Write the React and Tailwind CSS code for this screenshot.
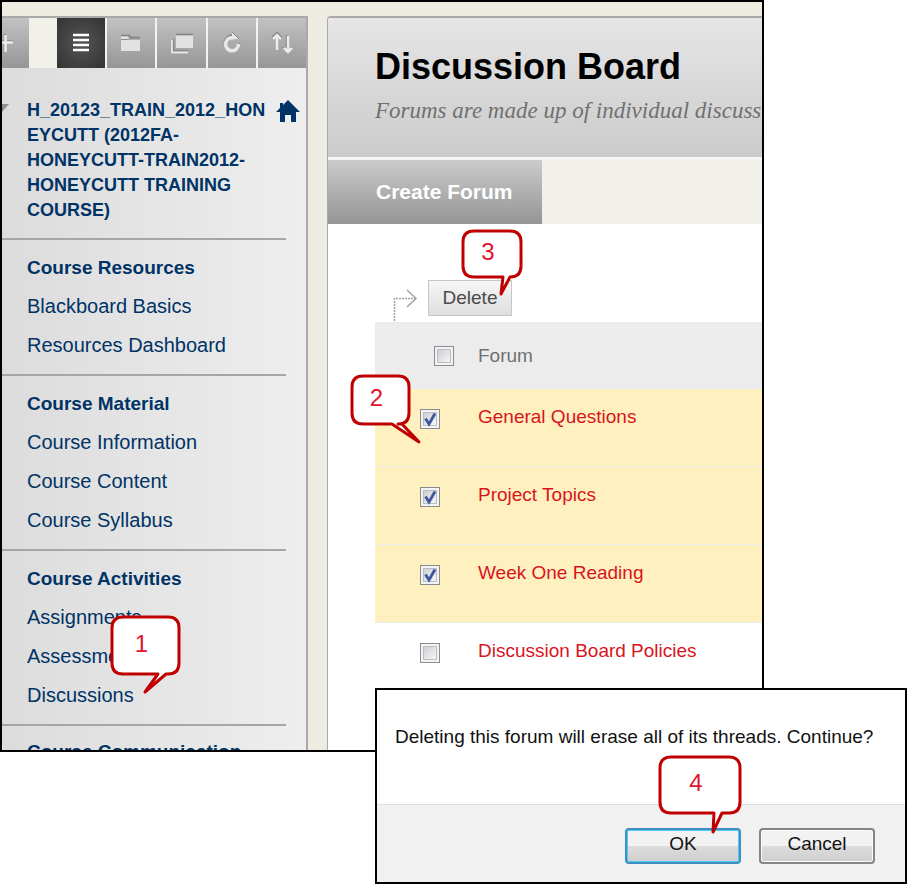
import { useState } from 'react';

const COURSE_SECTIONS = [
  { title: 'Course Resources', items: ['Blackboard Basics', 'Resources Dashboard'] },
  { title: 'Course Material', items: ['Course Information', 'Course Content', 'Course Syllabus'] },
  { title: 'Course Activities', items: ['Assignments', 'Assessments', 'Discussions'] },
];

const FORUMS = [
  { id: 'general', name: 'General Questions' },
  { id: 'topics', name: 'Project Topics' },
  { id: 'week-one', name: 'Week One Reading' },
  { id: 'policies', name: 'Discussion Board Policies' },
];

// Numbered speech bubble. `tail` is [left base x, right base x, tip x, tip y].
function Callout({ number, width: w, height: h, tail, className }) {
  const [baseLeft, baseRight, tipX, tipY] = tail;
  const r = 11;
  const d = `M${r} 0H${w - r}Q${w} 0 ${w} ${r}V${h - r}Q${w} ${h} ${w - r} ${h}H${baseRight}L${tipX} ${tipY}L${baseLeft} ${h}H${r}Q0 ${h} 0 ${h - r}V${r}Q0 0 ${r} 0Z`;

  return (
    <div className={`absolute z-10 pointer-events-none ${className}`} style={{ width: w, height: h }}>
      <svg width={w} height={h} className="absolute inset-0 overflow-visible" aria-hidden="true">
        <path d={d} fill="#fff" stroke="#c00000" strokeWidth="3" strokeLinejoin="round" />
      </svg>
      <span className="relative flex h-full items-center justify-center pr-2 pb-1 text-2xl font-normal text-[#e0142c]">
        {number}
      </span>
    </div>
  );
}

function ToolbarButton({ label, active, children }) {
  return (
    <button
      type="button"
      aria-label={label}
      className={`flex h-[50px] flex-1 items-center justify-center ${
        active
          ? 'bg-radial from-[#555] to-[#333]'
          : 'bg-linear-to-b from-[#c2c2c2] to-[#969696]'
      }`}
    >
      <svg width="24" height="24" viewBox="0 0 24 24" fill="none" aria-hidden="true">
        {children}
      </svg>
    </button>
  );
}

function CourseToolbar() {
  return (
    <div className="flex bg-[#f2f2f2]">
      <button
        type="button"
        aria-label="Add content"
        className="flex h-[50px] w-[27px] items-center bg-linear-to-b from-[#c2c2c2] to-[#969696]"
      >
        <svg width="12" height="20" viewBox="0 0 12 20" fill="none" aria-hidden="true">
          <path d="M3 1V18M0 8.500H11" stroke="#888" strokeWidth="2.500" />
          <path d="M3.500 2V19M0 9.500H11" stroke="#ececec" strokeWidth="2.500" />
        </svg>
      </button>
      <div className="w-7 bg-[#f1f1e9]" />
      <div className="flex flex-1 gap-0.5">
        <ToolbarButton label="List view" active>
          <path d="M4 4H20M4 9H20M4 14H20M4 19H20" stroke="#fff" strokeWidth="2.5" />
        </ToolbarButton>
        <ToolbarButton label="Folder view">
          <path d="M2 4.500H10L12 6.500H21" stroke="#808080" strokeWidth="1.500" />
          <path d="M2 5.500H9L11 9H21V20H2Z" fill="#e2e2e2" />
          <path d="M2 8.500H9L12 7H21" stroke="#8c8c8c" strokeWidth="1.200" />
        </ToolbarButton>
        <ToolbarButton label="Open in window">
          <path d="M6 3.500H23" stroke="#808080" strokeWidth="1.500" />
          <path d="M6 4.500H23V17H6Z" fill="#e2e2e2" />
          <path d="M2 9V21.500H18" stroke="#e4e4e4" strokeWidth="2" />
          <path d="M3.500 8V19.500H18" stroke="#858585" strokeWidth="1.200" />
        </ToolbarButton>
        <ToolbarButton label="Refresh">
          <path d="M15 5A7.500 7.500 0 1 0 19.500 12" stroke="#858585" strokeWidth="2" />
          <path d="M14 7A6.500 6.500 0 1 0 18.500 13" stroke="#e8e8e8" strokeWidth="3.500" />
          <path d="M12 1L19 8H12Z" fill="#e8e8e8" />
          <path d="M12 1L19 8" stroke="#858585" strokeWidth="1" />
        </ToolbarButton>
        <ToolbarButton label="Reorder">
          <path d="M2 7L7 2L12 7" stroke="#808080" strokeWidth="2" />
          <path d="M7 4V19M3 8L7 4L11 8" stroke="#ececec" strokeWidth="2.500" />
          <path d="M16.500 4V19M13 16L18 21L22 16" stroke="#808080" strokeWidth="1.500" />
          <path d="M18 5V20M14 17L18 21L22 17" stroke="#ececec" strokeWidth="2.500" />
        </ToolbarButton>
      </div>
    </div>
  );
}

function CourseMenu() {
  return (
    <nav
      aria-label="Course menu"
      className="w-[306px] shrink-0 border-t-2 border-r-2 border-[#a9a9a9] bg-linear-to-r from-[#dcdcdc] to-[#eee] text-[#003366]"
    >
      <CourseToolbar />

      <div className="mr-5">
        <div className="relative border-b-2 border-[#a6a6a6] pt-[30px] pb-[15px] pl-[25px]">
          <svg width="7" height="8" viewBox="0 0 7 8" className="absolute top-9 left-0" aria-hidden="true">
            <path d="M0 0H7L0 8Z" fill="#8f8f8f" />
          </svg>
          <h2 className="text-lg leading-[25px] font-bold whitespace-nowrap">
            H_20123_TRAIN_2012_HON
            <br />
            EYCUTT (2012FA-
            <br />
            HONEYCUTT-TRAIN2012-
            <br />
            HONEYCUTT TRAINING
            <br />
            COURSE)
          </h2>
          <a href="#home" aria-label="Course home" className="absolute top-8 -right-3.5">
            <svg width="24" height="24" viewBox="0 0 24 24" fill="#003366" aria-hidden="true">
              <path d="M12 0L24 12H20V22H15V15H9V22H4V12H0L4 8V3H7V5Z" />
            </svg>
          </a>
        </div>

        {COURSE_SECTIONS.map((section) => (
          <section key={section.title} className="border-b-2 border-[#a6a6a6] pt-2 pb-[9px] pl-[25px]">
            <h3 className="text-[19px] leading-[39px] font-bold">{section.title}</h3>
            <ul>
              {section.items.map((item) => (
                <li key={item} className="relative text-xl leading-[39px]">
                  <a href="#menu" className="block">{item}</a>
                  {item === 'Discussions' && (
                    <Callout
                      number={1}
                      width={67}
                      height={57}
                      tail={[46, 54, 33, 75]}
                      className="-top-[59px] left-[85px]"
                    />
                  )}
                </li>
              ))}
            </ul>
          </section>
        ))}

        {/* Next section, only its top edge is in view */}
        <h3 className="mt-2 h-4 overflow-hidden pl-[25px] text-[19px] leading-9 font-bold">
          Course Communication
        </h3>
      </div>
    </nav>
  );
}

function Checkbox({ checked, onChange, ...rest }) {
  return (
    <span className="relative block size-5">
      <input
        type="checkbox"
        checked={checked}
        onChange={onChange}
        className="block size-5 appearance-none border border-[#8a8b8d] bg-linear-to-br from-[#c3c7cd] to-white shadow-[inset_0_0_0_2px_#f4f4f4,inset_0_0_0_3px_#b9bcc2]"
        {...rest}
      />
      {checked && (
        <svg width="20" height="20" viewBox="0 0 20 20" className="pointer-events-none absolute inset-0" fill="none" aria-hidden="true">
          <path d="M5.500 9.500L9 15L15 4.500" stroke="#3f579b" strokeWidth="2.800" />
        </svg>
      )}
    </span>
  );
}

function ForumTable() {
  const [selected, setSelected] = useState(['general', 'topics', 'week-one']);

  const toggle = (id) =>
    setSelected((prev) => (prev.includes(id) ? prev.filter((s) => s !== id) : [...prev, id]));
  const allSelected = selected.length === FORUMS.length;
  const toggleAll = () => setSelected(allSelected ? [] : FORUMS.map((f) => f.id));

  return (
    <table className="w-full border-separate border-spacing-0 text-left text-[19px] leading-6">
      <thead>
        <tr className="bg-[#ececec] text-[#707070]">
          <th className="h-[67px] w-[103px] pl-[59px]">
            <Checkbox aria-label="Select all forums" checked={allSelected} onChange={toggleAll} />
          </th>
          <th className="font-normal">Forum</th>
        </tr>
      </thead>
      <tbody>
        {FORUMS.map((forum, i) => {
          const isSelected = selected.includes(forum.id);
          return (
            <tr key={forum.id} className={isSelected ? 'bg-[#fff1bf]' : 'bg-white'}>
              <td className="relative h-[78px] border-b border-[#ececec] pt-5 pl-[45px] align-top">
                <Checkbox
                  aria-labelledby={`forum-${forum.id}`}
                  checked={isSelected}
                  onChange={() => toggle(forum.id)}
                />
                {i === 0 && (
                  <Callout
                    number={2}
                    width={57}
                    height={48}
                    tail={[40, 50, 67, 66]}
                    className="-top-[13px] -left-[23px]"
                  />
                )}
              </td>
              <td className="border-b border-[#ececec] pt-4 align-top">
                <a id={`forum-${forum.id}`} href="#forum" className="text-[#d9141e]">{forum.name}</a>
              </td>
            </tr>
          );
        })}
      </tbody>
    </table>
  );
}

function DiscussionBoard() {
  return (
    <main className="min-w-0 flex-1 overflow-hidden rounded-tl border-t-2 border-l border-[#a9a9a9] bg-white">
      <header className="border-b-[3px] border-[#f6f6f6] bg-linear-to-b from-[#e6e6e6] to-[#cbcbcb] pt-[29px] pb-8 pl-[47px]">
        <h1 className="text-4xl leading-10 font-bold text-black">Discussion Board</h1>
        <p className="mt-2.5 font-['Liberation_Serif',serif] text-[23px] leading-7 whitespace-nowrap text-[#707070] italic">
          Forums are made up of individual discussions
        </p>
      </header>

      <div className="bg-[#f1f1e9]">
        <button
          type="button"
          className="h-16 bg-linear-to-b from-[#cbcbcb] to-[#959595] pr-[29px] pl-12 text-[21px] font-bold text-white"
        >
          Create Forum
        </button>
      </div>

      <div className="pt-14 pl-[47px]">
        <div className="flex h-[42px] items-start pl-[17px]">
          <svg width="26" height="34" viewBox="0 0 26 34" className="mt-2" fill="none" stroke="#a3a3a3" aria-hidden="true">
            <path d="M2.500 33V10.500H24" strokeWidth="1.500" strokeDasharray="2 1" />
            <path d="M15 2L24 10.500L15 19" strokeWidth="1.500" />
          </svg>
          <div className="relative ml-2.5">
            <button
              type="button"
              className="h-9 w-[84px] border border-[#c6c6c6] bg-linear-to-b from-[#f6f6f6] to-[#dedede] text-[19px] text-[#4a4a4a]"
            >
              Delete
            </button>
            <Callout
              number={3}
              width={58}
              height={46}
              tail={[40, 47, 38, 63]}
              className="-top-[49px] left-[35px]"
            />
          </div>
        </div>
        <ForumTable />
      </div>
    </main>
  );
}

function ConfirmDialog() {
  return (
    <div
      role="dialog"
      aria-labelledby="confirm-message"
      className="relative z-20 -mt-16 ml-[375px] border-2 border-black bg-white text-[19px] text-[#111]"
    >
      <p id="confirm-message" className="px-[18px] pt-[35px] pb-[55px] leading-6 whitespace-nowrap">
        Deleting this forum will erase all of its threads. Continue?
      </p>
      <div className="flex justify-end gap-[18px] border-t border-[#dfdfdf] bg-[#f1f1f1] pt-[23px] pr-[30px] pb-[18px]">
        <div className="relative">
          <button
            type="button"
            className="h-9 w-[116px] rounded-[4px] border-2 border-[#3c8fc0] bg-linear-to-b from-[#f2f2f2] from-50% via-[#dcdcdc] via-50% to-[#cfcfcf] pb-1 leading-6 shadow-[inset_0_0_0_1px_#4fcbf5]"
          >
            OK
          </button>
          <Callout
            number={4}
            width={80}
            height={56}
            tail={[54, 62, 53, 75]}
            className="-top-[71px] left-[35px]"
          />
        </div>
        <button
          type="button"
          className="h-9 w-[116px] rounded-[4px] border-2 border-[#858585] bg-linear-to-b from-[#f2f2f2] from-50% via-[#dcdcdc] via-50% to-[#cfcfcf] pb-1 leading-6 shadow-[inset_0_0_0_1px_#fafafa]"
        >
          Cancel
        </button>
      </div>
    </div>
  );
}

export default function App() {
  return (
    <div className="bg-white font-['Liberation_Sans',Arial,sans-serif]">
      <div className="mr-[143px] flex gap-[19px] overflow-hidden border-2 border-black bg-[#eeebe1] pt-3.5">
        <CourseMenu />
        <DiscussionBoard />
      </div>
      <ConfirmDialog />
    </div>
  );
}
